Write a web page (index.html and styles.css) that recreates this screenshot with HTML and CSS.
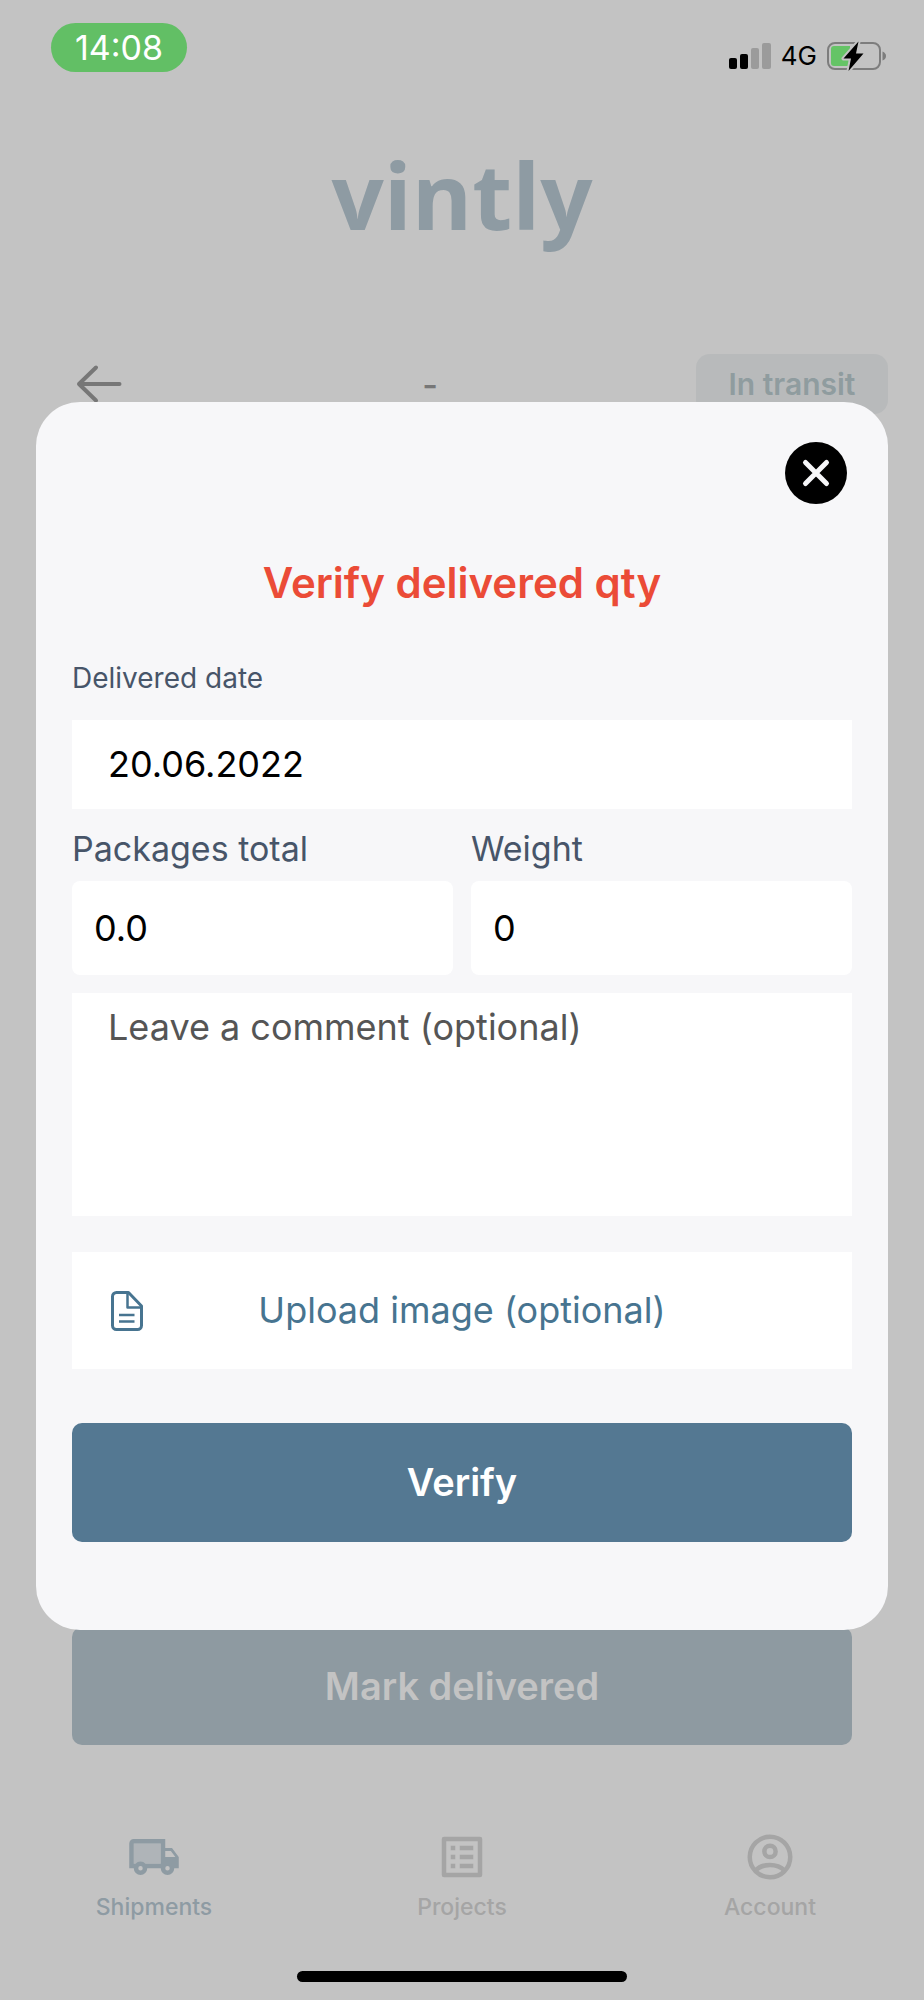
FILE: index.html
```html
<!DOCTYPE html>
<html lang="en">
<head>
<meta charset="utf-8">
<meta name="viewport" content="width=device-width, initial-scale=1">
<title>vintly – Shipments</title>
<link rel="stylesheet" href="styles.css">
</head>
<body>
<div class="screen">
  <header class="status">
    <span class="time">14:08</span>
    <div class="indicators">
      <svg class="signal" width="42" height="26" viewBox="0 0 42 26" aria-hidden="true">
        <rect x="0" y="15" width="8" height="11" rx="2"/>
        <rect x="11" y="11" width="8" height="15" rx="2"/>
        <rect x="22" y="5" width="8" height="21" rx="2" fill="#9b9b9b"/>
        <rect x="33" y="0" width="9" height="26" rx="2" fill="#9b9b9b"/>
      </svg>
      <span class="network">4G</span>
      <svg class="battery" width="60" height="30" viewBox="0 0 60 30" aria-hidden="true">
        <rect x="1" y="2" width="52" height="26" rx="7" fill="none" stroke="#7d7d7d" stroke-width="2"/>
        <path d="M55.500 10.500q3.500 1.500 3.500 4.500t-3.500 4.500z" fill="#7d7d7d"/>
        <path d="M7 5h16v20H7a3 3 0 0 1-3-3V8a3 3 0 0 1 3-3z" fill="#65c466"/>
        <path d="M31.500 0.500L16.500 17.500h7.500l-2.500 12.500 15-17.500h-7.500z" fill="#000" stroke="#c3c3c3" stroke-width="4" paint-order="stroke" stroke-linejoin="round"/>
      </svg>
    </div>
  </header>

  <div class="logo">vintly</div>

  <div class="toolbar">
    <button class="back" type="button" aria-label="Back">
      <svg width="46" height="40" viewBox="0 0 46 40" fill="none" stroke="#777" stroke-width="4" stroke-linecap="round" stroke-linejoin="round" aria-hidden="true"><path d="M43.500 20H3M20 3.500L3 20l17 16.500"/></svg>
    </button>
    <span class="reference">-</span>
    <span class="badge">In transit</span>
  </div>

  <button class="deliver" type="button">Mark delivered</button>

  <nav class="tabs">
    <a class="tab active" href="#shipments">
      <svg width="54" height="54" viewBox="0 0 24 24" fill="currentColor" aria-hidden="true">
        <path d="M3 6h12v9H3z" fill="#afb4b8"/>
        <path fill-rule="evenodd" d="M17 8V4H3a2 2 0 0 0-2 2v11h2a3 3 0 0 0 6 0h6a3 3 0 0 0 6 0h2v-5l-3-4zM3 6h12v9H8.220a3 3 0 0 0-4.440 0H3zM17 9.300h2.500L21.500 12H17zM6 18a1 1 0 1 1 0-2 1 1 0 0 1 0 2zM18 18a1 1 0 1 1 0-2 1 1 0 0 1 0 2z"/>
      </svg>
      <span>Shipments</span>
    </a>
    <a class="tab" href="#projects">
      <svg width="54" height="54" viewBox="0 0 24 24" fill="currentColor" aria-hidden="true">
        <path fill-rule="evenodd" d="M4 3h16a1 1 0 0 1 1 1v16a1 1 0 0 1-1 1H4a1 1 0 0 1-1-1V4a1 1 0 0 1 1-1zM5 5v14h14V5z"/>
        <path d="M7 7h2v2H7zM11 7h6v2h-6zM7 11h2v2H7zM11 11h6v2h-6zM7 15h2v2H7zM11 15h6v2h-6z"/>
      </svg>
      <span>Projects</span>
    </a>
    <a class="tab" href="#account">
      <svg width="54" height="54" viewBox="0 0 24 24" fill="none" stroke="currentColor" stroke-width="2" aria-hidden="true">
        <circle cx="12" cy="12" r="9"/><circle cx="12" cy="9.500" r="2.500"/><path d="M5.500 18q2.500-2.500 6.500-2.500t6.500 2.500"/>
      </svg>
      <span>Account</span>
    </a>
  </nav>
  <div class="home-bar"></div>
</div>

<div class="overlay">
  <form class="dialog" role="dialog" aria-modal="true" aria-labelledby="dialog-title">
    <button class="close" type="button" aria-label="Close">
      <svg width="62" height="62" viewBox="0 0 62 62" aria-hidden="true"><circle cx="31" cy="31" r="31"/><path d="M20.500 20.500l21 21m0-21l-21 21" stroke="#f7f7f9" stroke-width="5" stroke-linecap="round"/></svg>
    </button>
    <h1 class="title" id="dialog-title">Verify delivered qty</h1>
    <label class="label-small" for="date">Delivered date</label>
    <input class="field date" id="date" type="text" value="20.06.2022">
    <div class="pair">
      <div class="group">
        <label class="label" for="packages">Packages total</label>
        <input class="field number" id="packages" type="text" value="0.0">
      </div>
      <div class="group">
        <label class="label" for="weight">Weight</label>
        <input class="field number" id="weight" type="text" value="0">
      </div>
    </div>
    <textarea class="field comment" aria-label="Comment" placeholder="Leave a comment (optional)"></textarea>
    <button class="upload" type="button">
      <svg width="32" height="40" viewBox="0 0 32 40" fill="none" stroke="currentColor" stroke-width="3" stroke-linejoin="round" aria-hidden="true"><path d="M5.500 1.500h12L30.500 15v19.500a4 4 0 0 1-4 4h-21a4 4 0 0 1-4-4v-29a4 4 0 0 1 4-4z"/><path d="M16.500 2v14.500h13.500M8 24h15.500M8 30.500h15.500" stroke-width="2.500"/></svg>
      <span>Upload image (optional)</span>
    </button>
    <button class="verify" type="submit">Verify</button>
  </form>
</div>
</body>
</html>
```

FILE: styles.css
```css
* { box-sizing: border-box; }

body {
  margin: 0;
  background: #c3c3c3;
  font-family: Inter, "Liberation Sans", sans-serif;
}

button, input, textarea {
  font: inherit;
  color: inherit;
  border: 0;
  margin: 0;
  padding: 0;
  background: none;
}

svg { display: block; flex: none; }

.screen {
  min-height: 100vh;
  display: flex;
  flex-direction: column;
}

.status {
  display: flex;
  justify-content: space-between;
  align-items: flex-start;
  padding: 23px 37px 0 51px;
}

.time {
  padding: 0 24px;
  border-radius: 25px;
  background: #62bf65;
  color: #fff;
  font-size: 34px;
  font-weight: 400;
  line-height: 49px;
}

.indicators {
  display: flex;
  align-items: center;
  gap: 10px;
  padding-top: 18px;
}

.network {
  font-size: 26px;
  font-weight: 400;
  line-height: 30px;
}

.logo {
  margin-top: 67px;
  color: #8e9ba3;
  font-family: "Open Sans", "Noto Sans", sans-serif;
  font-size: 92px;
  font-weight: 700;
  line-height: 112px;
  text-align: center;
}

.toolbar {
  display: grid;
  grid-template-columns: 192px 1fr 192px;
  align-items: center;
  margin-top: 103px;
  padding: 0 36px;
}

.back { justify-self: start; margin-left: 40px; }

.reference {
  padding-right: 64px;
  color: #777;
  font-size: 34px;
  font-weight: 500;
  text-align: center;
}

.badge {
  border-radius: 14px;
  background: #b8babb;
  color: #8f9c9f;
  font-size: 30px;
  font-weight: 600;
  line-height: 60px;
  text-align: center;
}

.deliver {
  margin: auto 72px 80px;
  border-radius: 10px;
  background: #8e9aa1;
  color: #c3c3c3;
  font-size: 38px;
  font-weight: 600;
  line-height: 118px;
}

.tabs {
  display: grid;
  grid-template-columns: repeat(3, 1fr);
}

.tab {
  display: flex;
  flex-direction: column;
  align-items: center;
  gap: 9px;
  padding-top: 5px;
  color: #a5a5a5;
  font-size: 23px;
  font-weight: 500;
  line-height: 28px;
  text-decoration: none;
}

.active { color: #8e9ba3; }

.home-bar {
  align-self: center;
  width: 330px;
  height: 11px;
  margin: 50px 0 18px;
  border-radius: 6px;
  background: #000;
}

.overlay {
  position: absolute;
  inset: 0;
  display: flex;
  align-items: center;
  padding: 32px 36px 0;
}

.dialog {
  flex: 1;
  display: flex;
  flex-direction: column;
  padding: 40px 36px 88px;
  border-radius: 44px;
  background: #f7f7f9;
}

.close { align-self: flex-end; margin-right: 5px; }

.title {
  margin: 53px 0 0;
  color: #eb4b37;
  font-size: 42px;
  font-weight: 600;
  line-height: 52px;
  text-align: center;
}

.label-small, .label { color: #475569; }

.label-small {
  margin: 51px 0 24px;
  font-size: 28px;
  line-height: 36px;
}

.label { font-size: 34px; line-height: 44px; }

.field {
  width: 100%;
  background: #fff;
  color: #000;
  font-size: 36px;
  outline: 0;
}

.date { height: 89px; padding: 0 36px 2px; }

.pair {
  display: grid;
  grid-template-columns: 1fr 1fr;
  gap: 18px;
  margin: 18px 0;
}

.group { display: grid; gap: 10px; }

.number {
  height: 94px;
  padding: 0 22px;
  border-radius: 8px;
}

.comment {
  height: 223px;
  padding: 10px 36px;
  line-height: 48px;
  resize: none;
}

.comment::placeholder { color: #555; opacity: 1; }

.upload {
  display: grid;
  grid-template-columns: 32px 1fr 32px;
  align-items: center;
  margin: 36px 0 54px;
  padding: 0 39px;
  background: #fff;
  color: #477490;
  font-size: 36px;
  line-height: 117px;
}

.verify {
  border-radius: 10px;
  background: #547892;
  color: #fff;
  font-size: 38px;
  font-weight: 600;
  line-height: 119px;
}
```
